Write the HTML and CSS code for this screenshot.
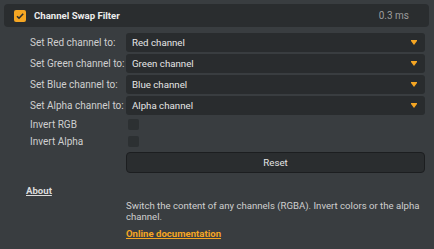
FILE: index.html
```html
<!DOCTYPE html>
<html lang="en">

<head>
    <meta charset="UTF-8">
    <title>Channel Swap Filter</title>
    <link rel="stylesheet" href="styles.css">
</head>

<body>
    <div class="panel">
        <div class="filter-header">
            <span class="check on">
                <svg width="12" height="12" viewBox="0 0 12 12"><path d="M3 6.2 L5 8.2 L9.2 3.8" fill="none" stroke="#2a2d2f" stroke-width="1.6"/></svg>
            </span>
            <span class="filter-title">Channel Swap Filter</span>
            <span class="filter-time">0.3 ms</span>
        </div>

        <div class="settings">
            <label>Set Red channel to:</label>
            <div class="dropdown">Red channel<span class="arrow"></span></div>

            <label>Set Green channel to:</label>
            <div class="dropdown">Green channel<span class="arrow"></span></div>

            <label>Set Blue channel to:</label>
            <div class="dropdown">Blue channel<span class="arrow"></span></div>

            <label>Set Alpha channel to:</label>
            <div class="dropdown">Alpha channel<span class="arrow"></span></div>

            <label class="small-row">Invert RGB</label>
            <div class="small-row"><span class="box"></span></div>

            <label class="small-row">Invert Alpha</label>
            <div class="small-row"><span class="box"></span></div>

            <div></div>
            <button class="reset">Reset</button>
        </div>

        <div class="about">
            <a class="about-link">About</a>
            <div class="about-text">
                <p>Switch the content of any channels (RGBA). Invert colors or the alpha channel.</p>
                <a class="doc-link">Online documentation</a>
            </div>
        </div>
    </div>
</body>

</html>
```

FILE: styles.css
```css
* {
    margin: 0;
    padding: 0;
    box-sizing: border-box;
}

body {
    font-family: Roboto, "Noto Sans", sans-serif;
    background-color: #393d40;
    color: #d8d8d8;
    width: 434px;
    height: 249px;
    overflow: hidden;
    white-space: nowrap;
}

.panel {
    padding: 4px 5px 0 4px;
}

.filter-header {
    display: flex;
    align-items: center;
    height: 23px;
    background-color: #2a2d2f;
    border-radius: 4px;
    padding: 0 20px 0 10px;
}

.check {
    width: 12px;
    height: 12px;
    border-radius: 2px;
    display: flex;
}

.check.on {
    background-color: #f5a623;
}

.filter-title {
    margin-left: 8px;
    font-size: 9.6px;
    font-weight: 700;
    color: #ececec;
}

.filter-time {
    margin-left: auto;
    font-size: 10px;
    color: #9c9c9c;
}

.settings {
    display: grid;
    grid-template-columns: 96px 1fr;
    row-gap: 2px;
    padding: 6px 4px 0 26px;
    font-size: 10px;
    align-items: center;
}

.settings label {
    color: #d0d0d0;
}

.dropdown {
    height: 19px;
    background-color: #292c2e;
    border-radius: 3px;
    display: flex;
    align-items: center;
    padding: 0 8px 0 6px;
    color: #e6e6e6;
    font-size: 9.7px;
}

.arrow {
    margin-left: auto;
    width: 0;
    height: 0;
    border-left: 3px solid transparent;
    border-right: 3px solid transparent;
    border-top: 4px solid #f5a623;
    box-shadow: 0 -1px 0 #f5a623;
}

.small-row {
    height: 15px;
    display: flex;
    align-items: center;
}

.box {
    width: 11px;
    height: 11px;
    margin-left: 2px;
    background-color: #2c3032;
    border-radius: 2px;
}

.reset {
    margin-top: 1px;
    height: 21px;
    background-color: #2a2d2f;
    border: 1px solid #1c1e20;
    border-radius: 4px;
    color: #e4e4e4;
    font-family: inherit;
    font-size: 9.7px;
}

.about {
    display: grid;
    grid-template-columns: 100px 1fr;
    padding: 12px 4px 0 22px;
    font-size: 9.6px;
    line-height: 11px;
}

.about-link {
    font-weight: 700;
    text-decoration: underline;
    color: #dcdcdc;
}

.about-text {
    padding-top: 15px;
    white-space: normal;
}

.about-text p {
    color: #cfcfcf;
}

.doc-link {
    display: inline-block;
    margin-top: 6px;
    font-weight: 700;
    color: #f5a623;
    text-decoration: underline;
}
```
